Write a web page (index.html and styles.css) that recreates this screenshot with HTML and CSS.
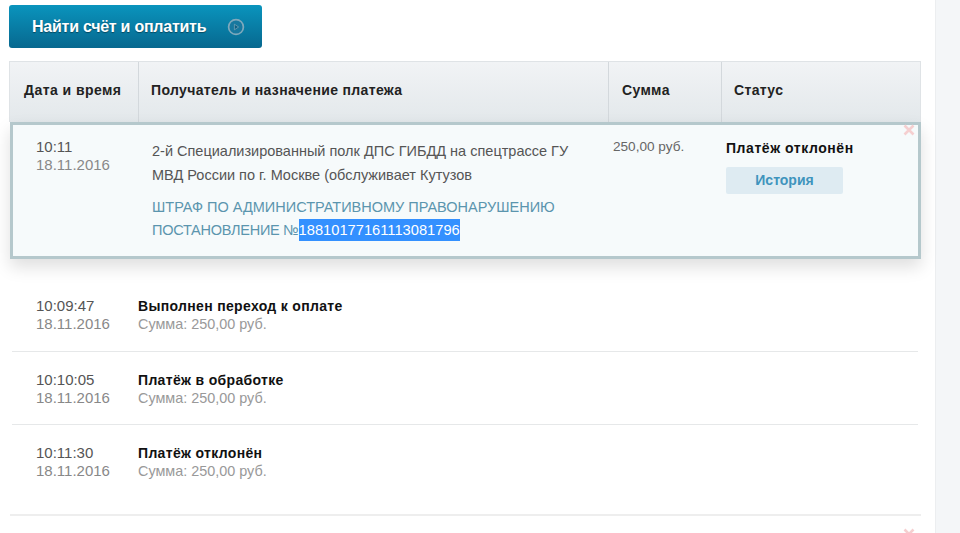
FILE: index.html
```html
<!DOCTYPE html>
<html>

<head>
  <title>История платежей</title>
  <link rel="stylesheet" href="styles.css">
</head>

<body>
  <div class="page">
    <div class="main">
      <a class="pay-btn">
        <span>Найти счёт и оплатить</span>
        <svg class="pay-icon" width="18" height="18" viewBox="0 0 18 18">
          <circle cx="9" cy="9" r="7.4" fill="#17789f" stroke="#7fa9bc" stroke-width="1.7" />
          <path d="M7.4 6.2 L11.6 9 L7.4 11.8 Z" fill="#0e5f82" stroke="#7fa9bc" stroke-width="0.7" />
        </svg>
      </a>

      <div class="table-head">
        <div class="th th-date">Дата и время</div>
        <div class="th th-target">Получатель и назначение платежа</div>
        <div class="th th-sum">Сумма</div>
        <div class="th th-status">Статус</div>
      </div>

      <div class="card">
        <div class="cell-date">
          <div class="time">10:11</div>
          <div class="date">18.11.2016</div>
        </div>
        <div class="cell-target">
          <p class="target-name">2-й Специализированный полк ДПС ГИБДД на спецтрассе ГУ МВД России по г. Москве (обслуживает Кутузов</p>
          <p class="target-note">ШТРАФ ПО АДМИНИСТРАТИВНОМУ ПРАВОНАРУШЕНИЮ <span class="note-no">ПОСТАНОВЛЕНИЕ №</span><span class="selected">18810177161113081796</span></p>
        </div>
        <div class="cell-sum">250,00 руб.</div>
        <div class="cell-status">
          <div class="status-text">Платёж отклонён</div>
          <div class="history-btn">История</div>
        </div>
        <svg class="close" width="12" height="12" viewBox="0 0 12 12">
          <path d="M1.5 1.5 L10.5 10.5 M10.5 1.5 L1.5 10.5" stroke="#f5cfd0" stroke-width="2.6" />
        </svg>
      </div>

      <div class="history">
        <div class="row">
          <div class="row-date">
            <div class="time">10:09:47</div>
            <div class="date">18.11.2016</div>
          </div>
          <div>
            <div class="row-title">Выполнен переход к оплате</div>
            <div class="row-sum">Сумма: 250,00 руб.</div>
          </div>
        </div>
        <div class="row">
          <div class="row-date">
            <div class="time">10:10:05</div>
            <div class="date">18.11.2016</div>
          </div>
          <div>
            <div class="row-title">Платёж в обработке</div>
            <div class="row-sum">Сумма: 250,00 руб.</div>
          </div>
        </div>
        <div class="row">
          <div class="row-date">
            <div class="time">10:11:30</div>
            <div class="date">18.11.2016</div>
          </div>
          <div>
            <div class="row-title">Платёж отклонён</div>
            <div class="row-sum">Сумма: 250,00 руб.</div>
          </div>
        </div>
      </div>

      <div class="next-item">
        <svg class="close-next" width="12" height="12" viewBox="0 0 12 12">
          <path d="M1.5 1.5 L10.5 10.5 M10.5 1.5 L1.5 10.5" stroke="#f5cfd0" stroke-width="2.6" />
        </svg>
      </div>
    </div>
    <div class="side"></div>
  </div>
</body>

</html>
```

FILE: styles.css
```css
html,
body {
  height: 100%;
  margin: 0;
  padding: 0;
  overflow: hidden;
}

body {
  background-color: white;
  font-family: "Liberation Sans", Arial, sans-serif;
  font-size: 14px;
  color: #333;
}

.page {
  display: flex;
  height: 100%;
}

.main {
  width: 935px;
  padding: 5px 14px 0 9px;
  box-sizing: border-box;
}

.side {
  flex: 1;
  background-color: #f4f6f8;
  border-left: 1px solid #eceef0;
}

/* button */
.pay-btn {
  display: flex;
  align-items: center;
  width: 253px;
  height: 43px;
  box-sizing: border-box;
  padding-left: 23px;
  background: linear-gradient(#0a94bd, #07688f);
  border-radius: 3px;
  color: white;
  font-size: 16px;
  font-weight: bold;
  letter-spacing: -0.25px;
  text-shadow: 0 1px 1px rgba(0, 0, 0, 0.4);
}

.pay-icon {
  margin-left: 21px;
}

/* table head */
.table-head {
  display: flex;
  height: 61px;
  margin-top: 13px;
  box-sizing: border-box;
  background: linear-gradient(#f1f3f5, #e3e8eb);
  border: 1px solid #dfe3e6;
  border-bottom: none;
}

.th {
  display: flex;
  align-items: center;
  box-sizing: border-box;
  padding: 0 0 4px 12px;
  border-right: 1px solid #d3d8dc;
  color: #222;
  font-weight: bold;
  font-size: 14px;
  letter-spacing: 0.35px;
}

.th-date {
  width: 129px;
  padding-left: 14px;
  letter-spacing: 0.45px;
}

.th-target {
  width: 470px;
}

.th-sum {
  width: 113px;
  padding-left: 13px;
}

.th-status {
  flex: 1;
  border-right: none;
}

/* open card */
.card {
  position: relative;
  display: flex;
  height: 137px;
  margin-left: 1px;
  box-sizing: border-box;
  background-color: #f6fafb;
  border: 3px solid #b5c8cc;
  box-shadow: 0 8px 16px rgba(0, 0, 0, 0.13);
}

.cell-date {
  flex: none;
  width: 117px;
  padding: 13px 0 0 23px;
  box-sizing: border-box;
}

.time {
  color: #555;
  font-size: 15px;
  line-height: 18px;
}

.date {
  color: #888;
  font-size: 15px;
  line-height: 18px;
}

.cell-target {
  flex: none;
  width: 483px;
  padding: 14px 0 0 22px;
  box-sizing: border-box;
}

.cell-target p {
  max-width: 430px;
  margin: 0;
  line-height: 24px;
  font-size: 14.5px;
}

.target-name {
  color: #555;
}

.cell-target .target-note {
  margin-top: 9px;
  line-height: 23px;
  color: #5b95ae;
}

.note-no {
  letter-spacing: -0.25px;
}

.selected {
  padding: 3px 0;
  background-color: #3390ff;
  color: white;
  font-size: 14.7px;
}

.cell-sum {
  flex: none;
  width: 113px;
  padding-top: 14px;
  box-sizing: border-box;
  color: #666;
  font-size: 13.6px;
}

.cell-status {
  padding-top: 15px;
}

.status-text {
  color: #111;
  font-weight: bold;
  font-size: 14px;
  letter-spacing: 0.55px;
}

.history-btn {
  width: 117px;
  height: 27px;
  margin-top: 11px;
  background-color: #deebf2;
  border-radius: 2px;
  color: #3f94bd;
  font-weight: bold;
  line-height: 27px;
  text-align: center;
}

.close {
  position: absolute;
  top: -1px;
  right: 3px;
}

/* history */
.history {
  padding: 0 3px;
  margin-top: 11px;
}

.row {
  display: flex;
  height: 73px;
  box-sizing: border-box;
  padding: 19px 0 0 24px;
  border-bottom: 1px solid #e6e8e9;
}

.row:first-child {
  height: 82px;
  padding-top: 27px;
}

.row:last-child {
  height: 89px;
  border-bottom: none;
}

.row-date {
  width: 102px;
}

.row-title {
  color: #111;
  font-weight: bold;
  font-size: 14px;
  letter-spacing: 0.33px;
  line-height: 18px;
}

.row-sum {
  color: #999;
  font-size: 14.4px;
  line-height: 18px;
}

.next-item {
  position: relative;
  margin-left: 1px;
  border-top: 2px solid #eeeeee;
}

.close-next {
  position: absolute;
  top: 12px;
  right: 6px;
}
```
